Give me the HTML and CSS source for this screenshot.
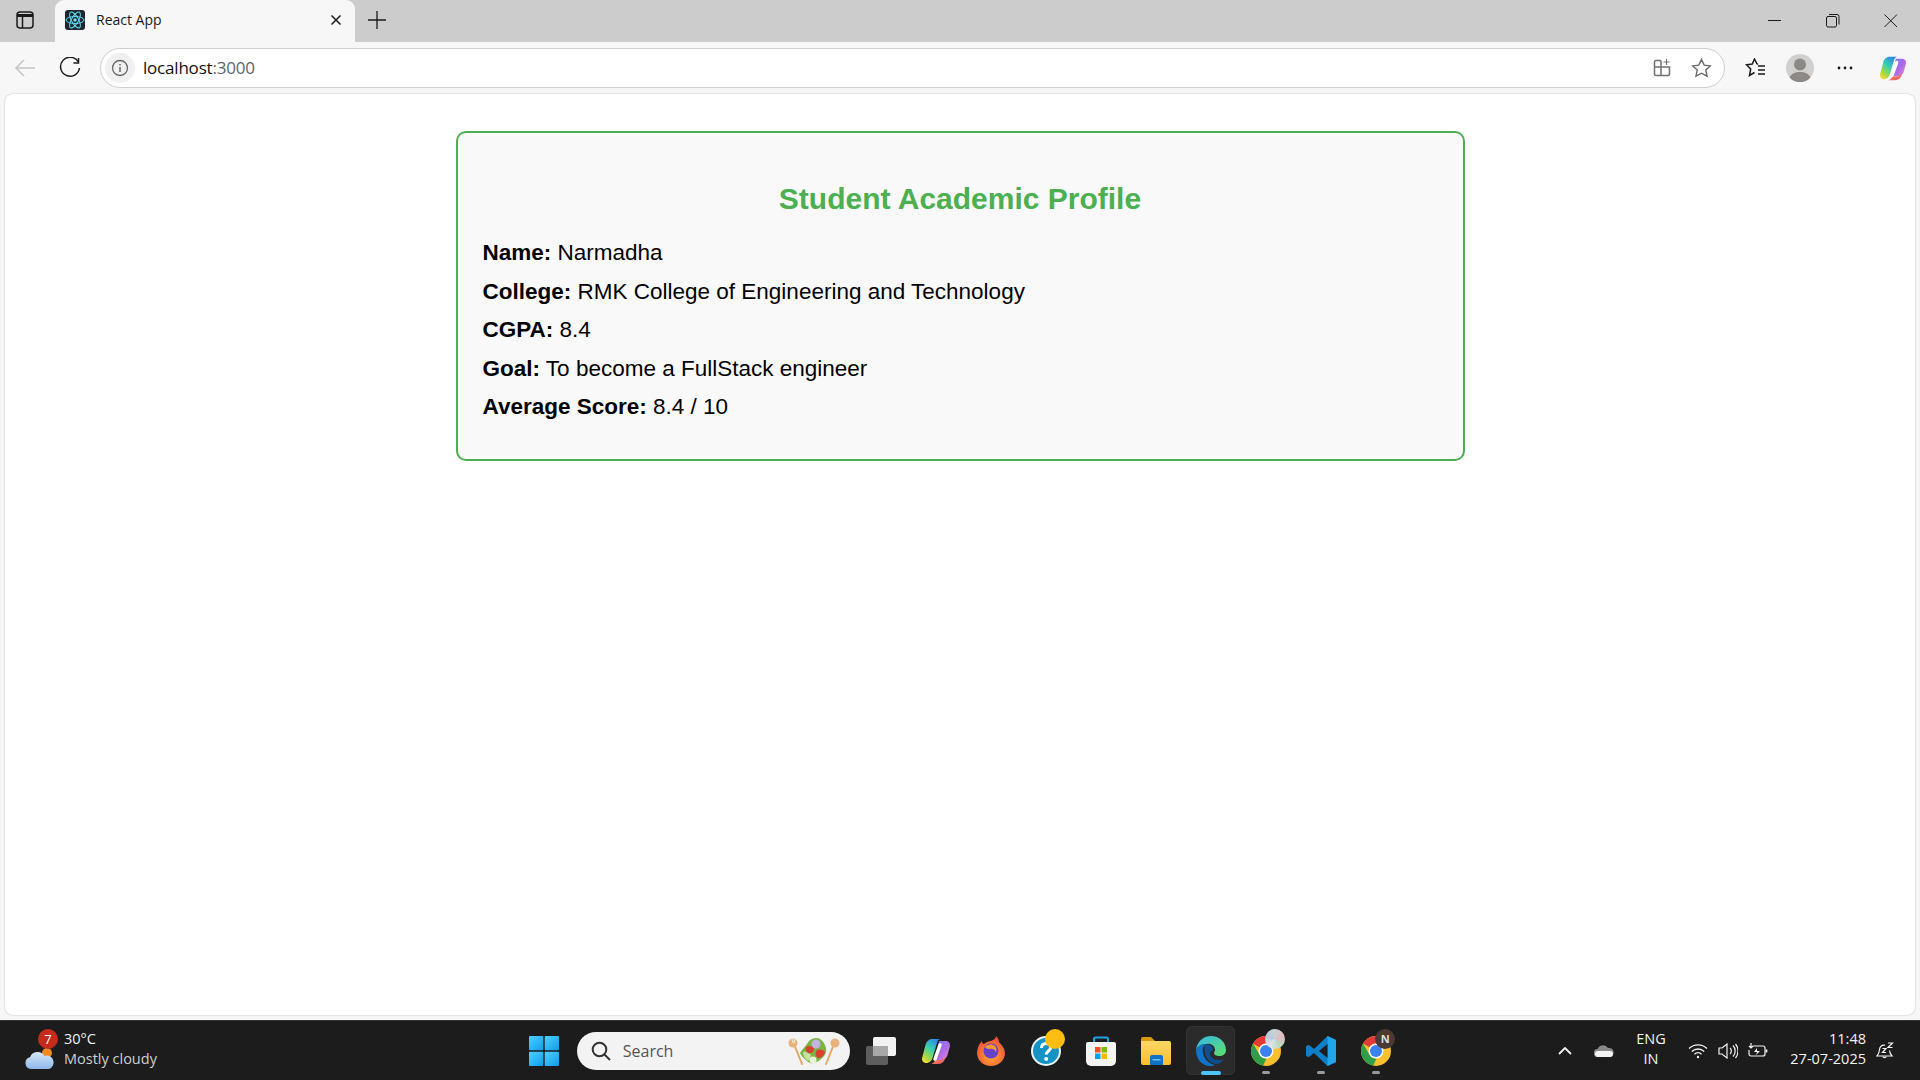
FILE: index.html
```html
<!DOCTYPE html>
<html>
<head>
<meta charset="UTF-8">
<title>React App</title>
<link rel="stylesheet" href="styles.css">
</head>
<body>
    <svg class="defs" width="0" height="0">
        <defs>
            <linearGradient id="copilotA" x1="0.8" y1="0" x2="0.2" y2="1">
                <stop offset="0" stop-color="#2f7ff0"/>
                <stop offset="0.45" stop-color="#37d0b0"/>
                <stop offset="0.8" stop-color="#a8d840"/>
                <stop offset="1" stop-color="#f8d838"/>
            </linearGradient>
            <linearGradient id="copilotB" x1="0" y1="0" x2="1" y2="1">
                <stop offset="0" stop-color="#6a7cf0"/>
                <stop offset="0.55" stop-color="#b06ae8"/>
                <stop offset="1" stop-color="#f08cc8"/>
            </linearGradient>
            <linearGradient id="copilotC" x1="0" y1="0" x2="1" y2="1">
                <stop offset="0" stop-color="#f8a83c"/>
                <stop offset="1" stop-color="#ec4a78"/>
            </linearGradient>
            <linearGradient id="winBlue" x1="0" y1="0" x2="1" y2="1">
                <stop offset="0" stop-color="#4fd0ff"/>
                <stop offset="1" stop-color="#0f9cec"/>
            </linearGradient>
            <linearGradient id="edgeGreen" x1="0" y1="0" x2="1" y2="1">
                <stop offset="0" stop-color="#35b8e6"/>
                <stop offset="1" stop-color="#5ee06b"/>
            </linearGradient>
            <linearGradient id="folderFill" x1="0" y1="0" x2="0" y2="1">
                <stop offset="0" stop-color="#ffd867"/>
                <stop offset="1" stop-color="#fbbd2d"/>
            </linearGradient>
            <linearGradient id="cloudFill" x1="0" y1="0" x2="0" y2="1">
                <stop offset="0" stop-color="#d8e8fa"/>
                <stop offset="1" stop-color="#8db8ea"/>
            </linearGradient>
            <radialGradient id="foxFill" cx="0.5" cy="0.65" r="0.65">
                <stop offset="0" stop-color="#ffb02e"/>
                <stop offset="1" stop-color="#f0443a"/>
            </radialGradient>
            <symbol id="copilot" viewBox="0 0 30 30">
                <path d="M18 5H24.500C28 5 29.500 7.500 28.800 10.500L26.500 19C25.700 22 23 24 20 24H14z" fill="url(#copilotB)"/>
                <path d="M9 28H17C20.500 28 23 26 24 23L25 20C24 22 22 24 19.500 24H14.500C13 26 12 28 9 28z" fill="url(#copilotC)"/>
                <path d="M11 3H20C17.500 3 16.500 5 16 7L11.500 22C10.800 24.500 8.500 27 5.500 27 2 27 .5 24.500 1.200 21.500L4.500 9C5.500 5.500 8 3 11 3z" fill="url(#copilotA)"/>
                <path d="M19 9L14 23" stroke="#fff" stroke-width="3.500" stroke-linecap="round"/>
            </symbol>
            <symbol id="chrome" viewBox="0 0 30 30">
                <circle cx="15" cy="15" r="15" fill="#fbc02d"/>
                <path d="M15 0A15 15 0 0 1 28 7.500H15A7.500 7.500 0 0 0 8.500 11.200L2 7.500A15 15 0 0 1 15 0z" fill="#e53935"/>
                <path d="M2 7.500l6.500 11.200A7.500 7.500 0 0 0 15.500 22.500L12 29.700A15 15 0 0 1 2 7.500z" fill="#2e9e49"/>
                <circle cx="15" cy="15" r="7.500" fill="#fff"/>
                <circle cx="15" cy="15" r="6" fill="#3b82f0"/>
            </symbol>
        </defs>
    </svg>

    <div class="tab-strip">
        <div class="tab-side">
            <svg width="18" height="18" viewBox="0 0 18 18" fill="none" stroke="#1a1a1a" stroke-width="1.500">
                <rect x="1" y="1" width="16" height="16" rx="3"/>
                <path d="M1 4.500h16" stroke-width="3"/>
                <path d="M6.500 5v12"/>
            </svg>
        </div>
        <div class="tab">
            <svg class="tab-logo" width="20" height="20" viewBox="0 0 20 20">
                <rect width="20" height="20" rx="3" fill="#20262c"/>
                <g fill="none" stroke="#61dafb" stroke-width="1">
                    <ellipse cx="10" cy="10" rx="9" ry="3.500"/>
                    <ellipse cx="10" cy="10" rx="9" ry="3.500" transform="rotate(60 10 10)"/>
                    <ellipse cx="10" cy="10" rx="9" ry="3.500" transform="rotate(120 10 10)"/>
                </g>
                <circle cx="10" cy="10" r="1.800" fill="#61dafb"/>
            </svg>
            <span class="tab-title">React App</span>
            <svg class="tab-close" width="12" height="12" viewBox="0 0 12 12" stroke="#1a1a1a" stroke-width="1.500">
                <path d="M1.500 1.500l9 9M10.500 1.500l-9 9"/>
            </svg>
        </div>
        <div class="tab-new">
            <svg width="18" height="18" viewBox="0 0 18 18" stroke="#1a1a1a" stroke-width="1.300">
                <path d="M9 0v18M0 9h18"/>
            </svg>
        </div>
        <div class="win-controls">
            <span class="win-btn">
                <svg width="14" height="14" viewBox="0 0 14 14" stroke="#1a1a1a" stroke-width="1"><path d="M0 6.500h13"/></svg>
            </span>
            <span class="win-btn">
                <svg width="14" height="14" viewBox="0 0 14 14" fill="none" stroke="#1a1a1a" stroke-width="1">
                    <rect x=".5" y="2.500" width="10" height="10.500" rx="1.500"/>
                    <path d="M3 .5h8a2 2 0 0 1 2 2v8"/>
                </svg>
            </span>
            <span class="win-btn">
                <svg width="14" height="14" viewBox="0 0 14 14" stroke="#1a1a1a" stroke-width="1"><path d="M.5.5l12.500 12.500M13 .5L.5 13"/></svg>
            </span>
        </div>
    </div>

    <div class="toolbar">
        <span class="tool-btn tool-back">
            <svg width="22" height="20" viewBox="0 0 22 20" fill="none" stroke="#c4c4c4" stroke-width="1.500">
                <path d="M21 10H2M10 2l-8 8 8 8"/>
            </svg>
        </span>
        <span class="tool-btn">
            <svg width="22" height="22" viewBox="0 0 22 22" fill="none" stroke="#1a1a1a" stroke-width="1.500">
                <path d="M19 4.500A9.500 9.500 0 1 0 20.500 11"/>
                <path d="M19.500 1v5h-5"/>
            </svg>
        </span>
        <div class="url-bar">
            <span class="url-info">
                <svg width="18" height="18" viewBox="0 0 18 18" fill="none" stroke="#666" stroke-width="1.300">
                    <circle cx="9" cy="9" r="7.500"/>
                    <path d="M9 8v5" stroke-width="1.500"/>
                    <path d="M9 5v1.500" stroke-width="1.500"/>
                </svg>
            </span>
            <span class="url-text">localhost<span class="url-port">:3000</span></span>
            <span class="url-icons">
                <svg width="18" height="18" viewBox="0 0 18 18" fill="none" stroke="#707070" stroke-width="1.500">
                    <path d="M8 1.500H3A1.500 1.500 0 0 0 1.500 3v12A1.500 1.500 0 0 0 3 16.500h12a1.500 1.500 0 0 0 1.500-1.500V8H1.500M8 1.500v15"/>
                    <path d="M13.500 0v6M10.500 3h6" stroke-width="1.100"/>
                </svg>
                <svg width="21" height="20" viewBox="0 0 21 20" fill="none" stroke="#666" stroke-width="1.400">
                    <path d="M10.500 1.500l2.700 5.600 6.100.8-4.500 4.200 1.200 6.100-5.500-3-5.500 3 1.200-6.100L1.700 7.900l6.100-.8z"/>
                </svg>
            </span>
        </div>
        <div class="tool-right">
            <span class="tool-item">
                <svg width="21" height="20" viewBox="0 0 21 20" fill="none" stroke="#1a1a1a" stroke-width="1.500">
                    <path d="M13 6.500l-1.200-1L9.500 1 7.300 6 1.500 6.800 5.700 11 4.500 17.500 9.500 14.500"/>
                    <path d="M13 8h7M13 12h7M13 16h7"/>
                </svg>
            </span>
            <span class="tool-item">
                <svg width="28" height="28" viewBox="0 0 28 28">
                    <circle cx="14" cy="14" r="14" fill="#d2d0ce"/>
                    <circle cx="14" cy="10.500" r="6" fill="#8c8986"/>
                    <path d="M3.500 23.500C5.500 19.500 9 18 14 18s8.500 1.500 10.500 5.500A14 14 0 0 1 3.500 23.500z" fill="#8c8986"/>
                </svg>
            </span>
            <span class="tool-item">
                <svg width="16" height="4" viewBox="0 0 16 4" fill="#1a1a1a">
                    <circle cx="2" cy="2" r="1.400"/>
                    <circle cx="8" cy="2" r="1.400"/>
                    <circle cx="14" cy="2" r="1.400"/>
                </svg>
            </span>
            <span class="tool-item tool-copilot">
                <svg width="28" height="28"><use href="#copilot"/></svg>
            </span>
        </div>
    </div>

    <div class="viewport">
        <div class="page">
            <div class="profile-card">
                <h2>Student Academic Profile</h2>
                <p><strong>Name:</strong> Narmadha</p>
                <p><strong>College:</strong> RMK College of Engineering and Technology</p>
                <p><strong>CGPA:</strong> 8.4</p>
                <p><strong>Goal:</strong> To become a FullStack engineer</p>
                <p><strong>Average Score:</strong> 8.4 / 10</p>
            </div>
        </div>
    </div>

    <div class="taskbar">
        <div class="weather">
            <span class="weather-icon">
                <svg width="32" height="22" viewBox="0 0 32 22">
                    <circle cx="23" cy="5" r="5" fill="#f08a1d"/>
                    <path d="M7 21a6 6 0 0 1-1-11.800A8 8 0 0 1 20.500 8 6.500 6.500 0 0 1 25 21z" fill="url(#cloudFill)"/>
                </svg>
                <span class="weather-badge">7</span>
            </span>
            <div class="weather-text">
                <span class="weather-temp">30°C</span>
                <span class="weather-desc">Mostly cloudy</span>
            </div>
        </div>

        <div class="task-center">
            <span class="task-item">
                <svg width="30" height="30" viewBox="0 0 30 30" fill="url(#winBlue)">
                    <rect width="14.300" height="14.300" rx="1"/>
                    <rect x="15.700" width="14.300" height="14.300" rx="1"/>
                    <rect y="15.700" width="14.300" height="14.300" rx="1"/>
                    <rect x="15.700" y="15.700" width="14.300" height="14.300" rx="1"/>
                </svg>
            </span>
            <div class="search-box">
                <svg width="20" height="20" viewBox="0 0 20 20" fill="none" stroke="#333" stroke-width="2">
                    <circle cx="8.500" cy="8.500" r="6.800"/>
                    <path d="M13.500 13.500l5.500 5.500"/>
                </svg>
                <span class="search-label">Search</span>
                <svg class="search-art" width="52" height="32" viewBox="0 0 52 32">
                    <g stroke="#e0a968" stroke-width="2" fill="none" stroke-linecap="round">
                        <path d="M6 9l8 20"/>
                        <path d="M46 9l-8 20"/>
                    </g>
                    <circle cx="5" cy="8" r="4.500" fill="#e8b27a"/>
                    <path d="M4 4l1 4M7 4l-1 4" stroke="#f3f3f3" stroke-width="1"/>
                    <circle cx="47" cy="8" r="4.500" fill="#e8b27a"/>
                    <path d="M12 18c2-4 6-7 9-12 3-3 8-4 11-2 3 2 5 5 6 9 1 5-2 9-6 12-3 2-7 4-10 3-4-2-8-6-10-10z" fill="#7cb342"/>
                    <path d="M15 17c3-1 6 0 8 3-1 3-1 5-3 6-3-2-5-5-5-9z" fill="#c5e1a5"/>
                    <circle cx="28" cy="9" r="4.500" fill="#c3b3e0"/>
                    <path d="M18 12c3-2 7-1 8 2 0 3-3 5-6 4-2-1-3-4-2-6z" fill="#d8432f"/>
                    <path d="M29 15c3-1 7 0 8 2-1 4-4 6-7 6-3-1-3-6-1-8z" fill="#d8432f"/>
                    <circle cx="25" cy="25" r="3.500" fill="#e6f2d6"/>
                </svg>
            </div>
            <span class="task-item">
                <svg width="30" height="28" viewBox="0 0 30 28">
                    <rect x="0" y="9" width="22" height="19" rx="2" fill="#5e5e5e"/>
                    <rect x="7" y="0" width="23" height="19" rx="2" fill="#f2f2f2"/>
                    <path d="M7 9h15v10H7z" fill="#a8a8a8"/>
                </svg>
            </span>
            <span class="task-item">
                <svg width="30" height="30"><use href="#copilot"/></svg>
            </span>
            <span class="task-item">
                <svg width="28" height="30" viewBox="0 0 28 30">
                    <path d="M2 9c1-2 2-3 3-4 0 2 1 3 2 3 2-2 5-3 7-3 3-1 5-3 5-5 2 2 3 4 3 6 3 3 6 7 6 11 0 7-6 13-14 13S0 24 0 17c0-3 1-6 2-8z" fill="url(#foxFill)"/>
                    <circle cx="14" cy="15" r="7.500" fill="#6a3fc9"/>
                    <path d="M8 11c2-2 5-3 8-2 3 1 4 4 3 7-1-3-4-4-7-3-2 0-3-1-4-2z" fill="#ff9a2f"/>
                </svg>
            </span>
            <span class="task-item task-help">
                <svg width="30" height="30" viewBox="0 0 30 30">
                    <circle cx="15" cy="15" r="14" fill="#1593c4" stroke="#e8f6fb" stroke-width="2"/>
                    <path d="M10.500 12c0-3 2-4.500 4.700-4.500s4.500 1.500 4.500 4c0 3.500-4.500 3.500-4.500 7" fill="none" stroke="#fff" stroke-width="3"/>
                    <circle cx="15.200" cy="23" r="2" fill="#fff"/>
                </svg>
                <span class="badge-dot"></span>
            </span>
            <span class="task-item">
                <svg width="30" height="30" viewBox="0 0 30 30">
                    <path d="M8 7V3a1.500 1.500 0 0 1 1.500-1.500h11A1.500 1.500 0 0 1 22 3v4" fill="none" stroke="#1aa3dd" stroke-width="2"/>
                    <path d="M2 6h26a2 2 0 0 1 2 2v17a5 5 0 0 1-5 5H5a5 5 0 0 1-5-5V8a2 2 0 0 1 2-2z" fill="#f4f4f4"/>
                    <rect x="9" y="11" width="5.500" height="5.500" fill="#f25022"/>
                    <rect x="15.500" y="11" width="5.500" height="5.500" fill="#7fba00"/>
                    <rect x="9" y="17.500" width="5.500" height="5.500" fill="#00a4ef"/>
                    <rect x="15.500" y="17.500" width="5.500" height="5.500" fill="#ffb900"/>
                </svg>
            </span>
            <span class="task-item">
                <svg width="30" height="28" viewBox="0 0 30 28">
                    <path d="M0 2a2 2 0 0 1 2-2h8l4 4h-14z" fill="#d99a0b"/>
                    <path d="M0 4h28a2 2 0 0 1 2 2v20a2 2 0 0 1-2 2H2a2 2 0 0 1-2-2z" fill="url(#folderFill)"/>
                    <path d="M9 20a2 2 0 0 1 2-2h9a2 2 0 0 1 2 2v8H9z" fill="#0f72c4"/>
                    <rect x="11.500" y="22" width="8" height="1.500" fill="#6cc1f5"/>
                </svg>
            </span>
            <span class="task-item task-active">
                <svg width="30" height="30" viewBox="0 0 30 30">
                    <path d="M0 14C1 6 7 0 15 0c8 0 15 6 15 14 0 4-3 6-7 6-3 0-5-1-5-3 0-1 1-2 1-3 0-4-4-7-9-6-5 0-9 3-10 6z" fill="url(#edgeGreen)"/>
                    <path d="M0 14c1-3 5-6 10-6-3 2-4 5-3 9 1 6 6 11 12 12-2 1-3 1-5 1C6 30 0 23 0 14z" fill="#1172c9"/>
                    <path d="M10 8c-2 3-2 6-1 9 1 6 6 10 11 11 3 0 6-2 8-5-2 1-4 1-6 1-4 0-8-3-8-7 0-1 1-2 3-3 0-3-3-6-7-6z" fill="#0e4f8f"/>
                </svg>
                <span class="indicator indicator-on"></span>
            </span>
            <span class="task-item">
                <svg width="30" height="30"><use href="#chrome"/></svg>
                <span class="badge-chrome"></span>
                <span class="indicator"></span>
            </span>
            <span class="task-item">
                <svg width="30" height="30" viewBox="0 0 30 30">
                    <path d="M21.500 0L30 4v22l-8.500 4L8 17l-5.500 4.200L0 19.700V10.300l2.500-1.500L8 13z" fill="#0f7fc7"/>
                    <path d="M21.500 0L30 4v22l-8.500 4z" fill="#23a5ea"/>
                    <path d="M21.500 8L13 15l8.500 7z" fill="#1c1c1c"/>
                </svg>
                <span class="indicator"></span>
            </span>
            <span class="task-item">
                <svg width="30" height="30"><use href="#chrome"/></svg>
                <span class="badge-n">N</span>
                <span class="indicator"></span>
            </span>
        </div>

        <div class="tray">
            <span class="tray-item tray-chevron">
                <svg width="14" height="8" viewBox="0 0 14 8" fill="none" stroke="#f2f2f2" stroke-width="1.800"><path d="M1 7l6-6 6 6"/></svg>
            </span>
            <span class="tray-item tray-cloud">
                <svg width="20" height="13" viewBox="0 0 20 13">
                    <path d="M4 13a4 4 0 0 1-.5-8A6 6 0 0 1 14 4a4.500 4.500 0 0 1 2 9z" fill="#8a8a8a"/>
                    <path d="M4 13a3 3 0 0 1 0-6h12a3 3 0 0 1 0 6z" fill="#f2f2f2"/>
                </svg>
            </span>
            <span class="tray-lang">ENG<br>IN</span>
            <span class="tray-item tray-icon">
                <svg width="20" height="16" viewBox="0 0 20 16" fill="none" stroke="#f2f2f2" stroke-width="1.300">
                    <path d="M1 5.500a13 13 0 0 1 18 0M3.800 8.500a9 9 0 0 1 12.400 0M6.500 11.200a5 5 0 0 1 7 0"/>
                    <circle cx="10" cy="14" r="1.200" fill="#f2f2f2" stroke="none"/>
                </svg>
            </span>
            <span class="tray-item tray-icon">
                <svg width="20" height="16" viewBox="0 0 20 16" fill="none" stroke="#f2f2f2" stroke-width="1.200">
                    <path d="M1 5h3l5-4v14l-5-4H1z"/>
                    <path d="M12 5a4 4 0 0 1 0 6M15 2.500a8 8 0 0 1 0 11M17.500 1a11 11 0 0 1 0 14" />
                </svg>
            </span>
            <span class="tray-item tray-icon">
                <svg width="20" height="16" viewBox="0 0 20 16" fill="none" stroke="#f2f2f2" stroke-width="1.200">
                    <path d="M5 3h10a2 2 0 0 1 2 2v6a2 2 0 0 1-2 2H3a2 2 0 0 1-2-2V7"/>
                    <path d="M18.500 6.500v3" stroke-width="1.600"/>
                    <path d="M3 0v5M1 3l2 2 2-2" />
                    <path d="M9 5l-3 4h3l-1 3 4-4H9z" fill="#f2f2f2" stroke="none"/>
                </svg>
            </span>
            <span class="tray-clock">11:48<br>27-07-2025</span>
            <span class="tray-item tray-bell">
                <svg width="18" height="18" viewBox="0 0 18 18" fill="none" stroke="#f2f2f2" stroke-width="1.200">
                    <path d="M9 3.200C6 2.500 3.800 4.500 3.500 7.500 3.300 10 2.800 12 1 14h15c-1.600-1.800-2.300-3.500-2.400-5.500"/>
                    <path d="M6.800 14.500a2 2 0 0 0 3.600 0"/>
                    <path d="M6.500 6.500h3.500l-3.500 4h3.500M12 1h4.500l-4.500 4.500h4.500"/>
                </svg>
            </span>
        </div>
    </div>
</body>
</html>
```

FILE: styles.css
```css
html, body {
    margin: 0;
    padding: 0;
}
body {
    font-family: "Open Sans", "Noto Sans", sans-serif;
    background: #f7f7f7;
    width: 1920px;
    height: 1080px;
    display: flex;
    flex-direction: column;
    overflow: hidden;
}
.defs {
    position: absolute;
}

/* tab strip */
.tab-strip {
    height: 42px;
    background: #cccccc;
    display: flex;
    flex-shrink: 0;
}
.tab-side {
    width: 55px;
    display: flex;
    align-items: center;
    justify-content: center;
    padding: 0 5px 2px 0;
    box-sizing: border-box;
}
.tab {
    width: 300px;
    background: #f7f7f7;
    border-radius: 9px 9px 0 0;
    display: flex;
    align-items: center;
    padding: 0 10px 2px;
    box-sizing: border-box;
}
.tab-logo {
    flex-shrink: 0;
}
.tab-title {
    font-size: 14px;
    color: #1a1a1a;
    margin-left: 11px;
    padding-bottom: 1px;
    flex: 1;
}
.tab-close {
    margin-right: 3px;
}
.tab-new {
    width: 44px;
    display: flex;
    align-items: center;
    justify-content: center;
    padding-bottom: 2px;
    box-sizing: border-box;
}
.win-controls {
    margin-left: auto;
    display: flex;
}
.win-btn {
    width: 58px;
    display: flex;
    align-items: center;
    justify-content: center;
    padding-bottom: 1px;
    box-sizing: border-box;
}

/* address bar row */
.toolbar {
    height: 52px;
    display: flex;
    align-items: center;
    flex-shrink: 0;
}
.tool-btn {
    width: 45px;
    display: flex;
    justify-content: center;
}
.tool-back {
    width: 44px;
    margin-left: 3px;
}
.url-bar {
    width: 1625px;
    height: 40px;
    margin-left: 8px;
    box-sizing: border-box;
    background: #fff;
    border: 1px solid #cfcfcf;
    border-radius: 20px;
    display: flex;
    align-items: center;
    padding: 0 12.500px 0 4px;
}
.url-info {
    width: 30px;
    height: 30px;
    border-radius: 50%;
    background: #f0f0f0;
    display: flex;
    align-items: center;
    justify-content: center;
}
.url-text {
    font-size: 17px;
    color: #111;
    margin-left: 8px;
    padding-bottom: 2px;
    letter-spacing: -0.2px;
}
.url-port {
    color: #5a6470;
}
.url-icons {
    margin-left: auto;
    display: flex;
    align-items: center;
    gap: 20px;
}
.tool-right {
    display: flex;
    align-items: center;
    margin-left: 7.500px;
}
.tool-item {
    width: 45px;
    display: flex;
    justify-content: center;
}
.tool-copilot {
    margin-left: 3px;
}

/* web page */
.viewport {
    flex: 1;
    padding: 0 5px 5px;
    min-height: 0;
}
.page {
    height: 100%;
    background: #fff;
    border-radius: 8px;
    box-sizing: border-box;
    box-shadow: 0 0 2px rgba(0, 0, 0, 0.25);
    padding-top: 37px;
    font-family: "Liberation Sans", Arial, sans-serif;
}
.profile-card {
    width: 1009px;
    box-sizing: border-box;
    margin: 0 auto;
    padding: 25px 25px 27px;
    background: #f9f9f9;
    border: 2px solid #4caf50;
    border-radius: 10px;
    color: #000;
}
.profile-card h2 {
    color: #4caf50;
    font-size: 30px;
    text-align: center;
    margin: 24px 0 23px;
}
.profile-card p {
    font-size: 22.500px;
    margin: 0 0 11px;
    line-height: 27.500px;
}

/* taskbar */
.taskbar {
    height: 60px;
    flex-shrink: 0;
    background: #1c1c1c;
    border-top: 1px solid #333;
    box-sizing: border-box;
    display: grid;
    grid-template-columns: 1fr auto 1fr;
    align-items: center;
    color: #f2f2f2;
}
.weather {
    display: flex;
    align-items: center;
    padding-left: 24px;
}
.weather-icon {
    position: relative;
    width: 40px;
    height: 38px;
    display: flex;
    align-items: flex-end;
}
.weather-badge {
    position: absolute;
    left: 14px;
    top: -3px;
    width: 20px;
    height: 20px;
    border-radius: 50%;
    background: #c42b1c;
    color: #fff;
    font-size: 13px;
    line-height: 20px;
    text-align: center;
}
.weather-text {
    display: flex;
    flex-direction: column;
    font-size: 14.500px;
    line-height: 20.500px;
    padding-bottom: 3px;
}
.weather-desc {
    color: #cfcfcf;
}
.task-center {
    display: flex;
    align-items: center;
    height: 100%;
}
.task-item {
    position: relative;
    width: 55px;
    height: 49px;
    display: flex;
    align-items: center;
    justify-content: center;
}
.task-active {
    background: #2b2b2b;
    border-radius: 6px;
    width: 49px;
    margin: 0 3px;
    box-shadow: inset 0 0 0 1px #333;
}
.search-box {
    width: 273px;
    height: 38px;
    margin: 0 3.500px 0 5px;
    box-sizing: border-box;
    background: #f3f3f3;
    border-radius: 19px;
    display: flex;
    align-items: center;
    padding: 0 10px 0 14px;
    color: #555;
}
.search-label {
    font-size: 16px;
    margin-left: 12px;
    flex: 1;
}
.badge-dot, .badge-chrome, .badge-n {
    position: absolute;
    width: 20px;
    height: 20px;
    border-radius: 50%;
    top: 3px;
    right: 8px;
}
.badge-dot {
    background: #fdbd12;
}
.badge-chrome {
    background: conic-gradient(#c9d3d2, #e3b9c4, #b6d8c0, #dfe3e8, #bcc8e0, #c9d3d2);
}
.badge-n {
    background: #4a3a35;
    color: #ddd;
    font-size: 11px;
    font-weight: bold;
    line-height: 20px;
    text-align: center;
}
.indicator {
    position: absolute;
    bottom: 1px;
    left: 50%;
    width: 8px;
    height: 3px;
    margin-left: -4px;
    border-radius: 2px;
    background: #9a9a9a;
}
.indicator-on {
    width: 20px;
    height: 4px;
    margin-left: -10px;
    background: #4cc2ff;
    bottom: 0;
}
.tray {
    display: flex;
    align-items: center;
    justify-content: flex-end;
    font-size: 14.500px;
}
.tray-item {
    display: flex;
    align-items: center;
    justify-content: center;
}
.tray-chevron {
    width: 30px;
}
.tray-cloud {
    width: 48px;
}
.tray-lang {
    width: 46px;
    text-align: center;
    line-height: 20px;
    padding-bottom: 3px;
}
.tray-icon {
    width: 30px;
}
.tray-lang + .tray-icon {
    margin-left: 9px;
}
.tray-clock {
    width: 93px;
    text-align: right;
    line-height: 20px;
    padding-bottom: 3px;
}
.tray-bell {
    width: 38px;
    margin-right: 16px;
}
```
